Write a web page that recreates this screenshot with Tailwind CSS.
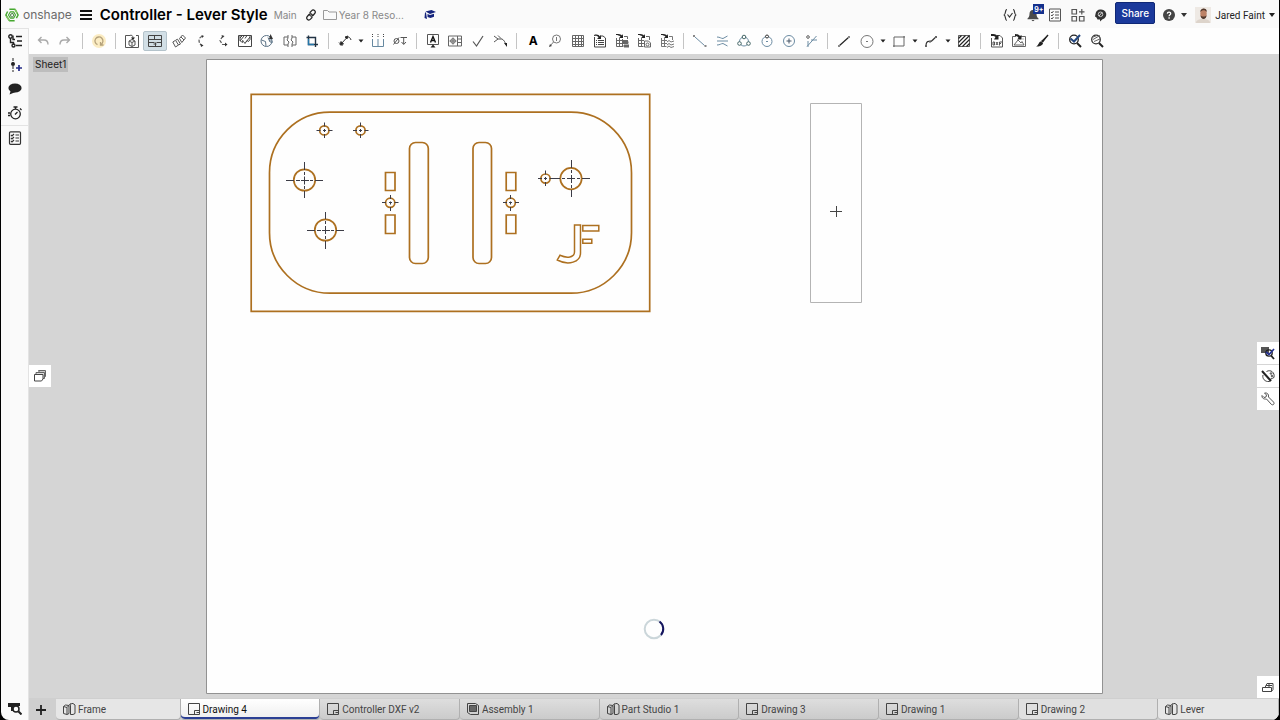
<!DOCTYPE html>
<html lang="en">
<head>
<meta charset="utf-8">
<meta name="viewport" content="width=device-width, initial-scale=1">
<title>Controller - Lever Style</title>
<script src="https://cdn.jsdelivr.net/npm/@tailwindcss/browser@4"></script>
</head>
<body class="h-screen bg-black font-['Inter','Liberation_Sans',sans-serif] text-[#333]">
<div class="flex h-screen flex-col px-px">
<div class="flex min-h-0 flex-1 flex-col overflow-hidden rounded-b-lg bg-[#fafafa]">

  <!-- Document header -->
  <header class="flex h-7 shrink-0 items-center pt-0.5 text-[10px]">
    <a href="#" class="ml-1 flex items-center gap-1 text-xs text-[#6b6b6b]" aria-label="Onshape">
      <svg class="size-3.5" viewBox="0 0 16 16" fill="none" stroke="#45a72f" stroke-width="1.7" stroke-linejoin="round"><path d="M5 1.5h6.500L15 8l-2 3.500M11 14.500H5L1 8l2-4"/><path d="M11.500 1.500 14 6M1.500 9.500 5 14.500" stroke="#85c663"/><path d="M6 4.500h4L12 8l-2 3.500H6L4 8z" stroke-width="1.300"/><path d="M6.500 7 9 6l1 3-2 1.500-1.500-1z" stroke="#286e24" stroke-width="1"/></svg>
      <span>onshape</span>
    </a>
    <button aria-label="Menu" class="ml-2"><svg class="h-3 w-3" viewBox="0 0 12 12" stroke="#111" stroke-width="1.800"><path d="M0 2h12M0 6h12M0 10h12"/></svg></button>
    <h1 class="ml-2 text-[15px] font-semibold whitespace-nowrap text-black">Controller - Lever Style</h1>
    <span class="ml-1.5 text-[#888]">Main</span>
    <button aria-label="Copy link" class="ml-2"><svg class="size-3" viewBox="0 0 12 12" fill="none" stroke="#222" stroke-width="1.200" stroke-linecap="round"><path d="m5 3.500 1.500-1.700c2-2 5 .5 3.200 2.700L8 6.500c-1 1-2.500.8-3.200-.3M7 8.500l-1.500 1.700c-2 2-5-.5-3.200-2.700L4 5.500c1-1 2.500-.8 3.200.3"/></svg></button>
    <a href="#" class="ml-1.5 flex items-center gap-0.5 text-[#888]">
      <svg class="h-3 w-3.5" viewBox="0 0 14 12" fill="none" stroke="#999"><path d="M.5 10.500v-9h4l1.500 1.500h7.500v7.500z"/></svg>Year 8 Reso...</a>
    <button aria-label="Learning center" class="ml-5"><svg class="h-3 w-3" viewBox="0 0 12 12" fill="#15247c"><path d="M1.500 2.500 7.500 1 12 3 6 5zM3.500 5 6 6l4-1.300v3L6.500 9 3.500 8zM1 3.500h1L3 10 .5 9z"/></svg></button>

    <div class="ml-auto flex items-center">
      <button aria-label="Variables"><svg class="h-3.5 w-3.5" viewBox="0 0 14 14" fill="none" stroke="#333" stroke-width="1.200"><path d="M4 1.500C1.500 1.500 3.500 6.500.8 7c2.700.5.700 5.500 3.200 5.500M10 1.500c2.500 0 .500 5 3.200 5.500-2.700.500-.700 5.500-3.200 5.500M4.500 6.500 6.500 9l3-4"/></svg></button>
      <button aria-label="Notifications" class="relative ml-2.5"><svg class="h-3.5 w-3" viewBox="0 0 12 14" fill="#4a4a4a"><path d="M6 2C3.500 2 2.500 4 2.500 6c0 2.500-.8 3.500-2 4.500v.7h11v-.7c-1.200-1-2-2-2-4.500 0-2-1-4-3.500-4zM4.500 12h3c-.5 1.500-2.500 1.500-3 0z"/></svg><span class="absolute -top-1 left-1.5 flex h-2.5 w-[11px] items-center justify-center bg-[#14308c] text-[7px] leading-none font-bold text-white">9+</span></button>
      <button aria-label="Tasks" class="ml-2.5"><svg class="h-3.5 w-3" viewBox="0 0 12 14" fill="none" stroke="#555"><path d="M.5 1h11v12H.5zM6 4h4M6 7h4M6 10h4M2 4l1 1 1.500-2M2 7l1 1 1.500-2M2 10l1 1 1.500-2"/></svg></button>
      <button aria-label="Apps" class="ml-2.5"><svg class="size-3.5" viewBox="0 0 14 14" fill="none" stroke="#555" stroke-width="1.200"><path d="M1 1.500h4.500V6H1zM1 8.500h4.500V13H1zM8.500 8.500H13V13H8.500zM10.800 1v5.500M8 3.800h5.500" /></svg></button>
      <button aria-label="AI advisor" class="ml-2"><svg class="size-3.5" viewBox="0 0 14 14"><path d="M7 1.500a5.300 5 0 0 1 2.500 9.700L7 13.500v-2H4.500l-1-2-1.500-1 .5-2.500C2.800 3 5 1.500 7 1.500z" fill="#333"/><circle cx="7.500" cy="6.300" r="2.300" fill="none" stroke="#fff" stroke-width=".7"/><path d="m6 8 3-3.500" stroke="#fff" stroke-width=".8"/></svg></button>
      <button class="-mt-1 ml-2 h-[22px] w-10 rounded-xs border border-[#0f2775] bg-[#1b399b] font-medium text-white">Share</button>
      <button aria-label="Help" class="ml-2 flex items-center gap-1.5"><svg class="size-3" viewBox="0 0 12 12"><circle cx="6" cy="6" r="6" fill="#444"/><path d="M4.300 4.600C4.500 2.600 7.800 2.700 7.700 4.700 7.600 5.800 6.100 5.900 6.100 7.200M6.100 8.300v1.400" fill="none" stroke="#fff" stroke-width="1.300"/></svg><svg class="h-1 w-1.5" viewBox="0 0 6 4" fill="#333"><path d="M0 0h6L3 4z"/></svg></button>
      <button class="mr-1 ml-2 flex items-center gap-1 font-['Roboto',sans-serif] whitespace-nowrap text-[#222]">
        <svg class="size-4" viewBox="0 0 16 16"><path d="M0 0h16v16H0z" fill="#eee9e4"/><path d="M1 16c0-3 3-4 7-4s7 1 7 4z" fill="#ddd4cb"/><ellipse cx="8.500" cy="6.500" rx="3.200" ry="4.800" fill="#bd8266"/><path d="M5.300 5C5 1 12 0 11.800 5c-2-2.500-4.500-2-6.500 0zM5.500 8c.5 2 5.500 2 6 0 .2 5-5.800 5.500-6 0z" fill="#51382c"/></svg>
        Jared Faint<svg class="h-1 w-1.5" viewBox="0 0 6 4" fill="#222"><path d="M0 0h6L3 4z"/></svg></button>
    </div>
  </header>

  <div class="flex min-h-0 flex-1">
    <!-- Side rail -->
    <nav class="flex w-7 shrink-0 flex-col items-center border-t border-r border-[#e3e3e3] [&_svg]:size-3.5 [&>button]:flex [&>button]:h-6 [&>button]:w-full [&>button]:items-center [&>button]:justify-center" aria-label="Panels">
      <button aria-label="Feature list"><svg viewBox="0 0 14 14" fill="none" stroke="#222" stroke-width="1.400"><circle cx="2.500" cy="2.500" r="1.700"/><path d="M2.500 4v4.500h3v2M5 1.500v4h2M8 2.500h6M9 7h5M8 11.500h6"/><circle cx="5.500" cy="11.500" r="1.500"/></svg></button>
      <button aria-label="Insert version"><svg viewBox="0 0 14 14" fill="none" stroke="#222"><path d="M5 0v14" stroke-dasharray="3 1"/><circle cx="5" cy="6" r="2" fill="#222" stroke="none"/><path d="M8 10h6M11 7v6" stroke="#232a85" stroke-width="1.700"/></svg></button>
      <button aria-label="Comments"><svg viewBox="0 0 14 14" fill="#222"><ellipse cx="7" cy="6" rx="6.600" ry="4.600"/><path d="M3 8 1.500 12.500 7.500 10z"/></svg></button>
      <button aria-label="History"><svg viewBox="0 0 14 14" fill="none" stroke="#222" stroke-width="1.300"><circle cx="7.500" cy="8" r="4.800"/><path d="M5.500 1h4M7.500 1v2M12 2.500l1.500 1.500M7 8.500 9.500 6M0 7h2M0 9.500h2"/></svg></button>
      <button aria-label="Properties" class="border-t border-[#e3e3e3]"><svg viewBox="0 0 14 14" fill="none" stroke="#333" stroke-width="1.200"><rect x="1.500" y=".8" width="11" height="12.500" rx="1"/><path d="M7.500 4H11M7.500 7H11M7.500 10H11M3 4l1 1 2-2M3 7l1 1 2-2M3 10l1 1 2-2"/></svg></button>
      <button class="mt-auto" aria-label="Search tabs"><svg viewBox="0 0 14 14"><path d="M0 2h12v3H6v5H3V6H0z" fill="#222"/><circle cx="8" cy="8" r="3" fill="#fff" stroke="#222" stroke-width="1.500"/><path d="m10.500 10.500 3 3" stroke="#222" stroke-width="2"/></svg></button>
    </nav>

    <div class="flex min-w-0 flex-1 flex-col">
      <!-- Drawing toolbar -->
      <div role="toolbar" aria-label="Drawing tools" class="h-[26px] shrink-0 bg-[#fefefe] pl-[3px]">
        <div class="flex h-full w-[1076px] items-center [&_svg]:size-3.5 [&_svg]:shrink-0 [&>button]:flex [&>button]:h-5 [&>button]:min-w-0 [&>button]:flex-[22_1_0] [&>button]:items-center [&>button]:justify-center [&>button.menu]:flex-[10_1_0] [&>hr]:h-4 [&>hr]:flex-[11_1_0] [&>hr]:border-0 [&>hr]:bg-[linear-gradient(#c4c4c4,#c4c4c4)] [&>hr]:bg-[length:1px_100%] [&>hr]:bg-center [&>hr]:bg-no-repeat">
          <button aria-label="Undo"><svg viewBox="0 0 14 14" fill="none" stroke="#aaa" stroke-width="1.400"><path d="M5.500 3 2.500 6l3 3M3 6h5c3 0 4 1.500 4 4.500"/></svg></button>
          <button aria-label="Redo"><svg viewBox="0 0 14 14" fill="none" stroke="#aaa" stroke-width="1.400"><path d="m8.500 3 3 3-3 3M11 6H6c-3 0-4 1.500-4 4.500"/></svg></button>
          <hr>
          <button aria-label="Update"><svg viewBox="0 0 14 14" fill="none"><circle cx="7" cy="7" r="7" fill="#fbecc3"/><path d="M5.500 10.700a4 4 0 1 1 3.500-.3M8.500 8v3h3" stroke="#b5a27b" stroke-width="1.300"/></svg></button>
          <hr>
          <button aria-label="Insert view"><svg viewBox="0 0 14 14" fill="none" stroke="#555"><path d="M5 1.500H.5v12h13v-12H11M4 7l3-1.500L10 7v4l-3 1.500L4 11zM4 7l3 1.500L10 7M7 8.500v4M4.500 1.500C7 .5 8 2 8 4"/><path d="M6 3.500h4L8 6z" fill="#222" stroke="none"/></svg></button>
          <button aria-label="Projected view" aria-pressed="true" class="rounded-xs border border-[#b4c3cb] bg-[#d2dfe6]"><svg viewBox="0 0 14 14" fill="none" stroke="#444"><path d="M.5 1.500h13v11H.5zM.5 5.500h13M6.500 1.500v4M.5 8.500h6M8.500 8.500h5M7.500 8.500v4M5.500 10h3"/></svg></button>
          <button aria-label="Auxiliary view"><svg viewBox="0 0 14 14" fill="none" stroke="#555"><path d="m.8 8 2.700-1.700L6.500 11l-3 2zM4 6l1.500-.8L8.500 10l-2 1M7.500 4.500 10.500 1 13.500 4 9.800 8.500zM9 3l3 3"/></svg></button>
          <button aria-label="Section view"><svg viewBox="0 0 14 14" fill="none" stroke="#555" stroke-width="1.200"><path d="M8 2.500C4.500 3.500 4 8 7 11" stroke-dasharray="3 1.500"/><path d="m7.500 1 2.500 1-2 2zM6.500 9.500l3 2-2.500 1.500z" fill="#333" stroke="none"/></svg></button>
          <button aria-label="Aligned section"><svg viewBox="0 0 14 14" fill="none" stroke="#555" stroke-width="1.200"><path d="M6.500 2.500 4 6.500 6.500 10.500H10" stroke-dasharray="3 1.500"/><path d="m5.500 1 3 1-2 2zM9 8.500l2.500 2L9 12.500z" fill="#333" stroke="none"/></svg></button>
          <button aria-label="Broken-out section"><svg viewBox="0 0 14 14" fill="none" stroke="#444"><path d="M.5 1.500h13v11H.5zM2 1.500v5l2 2 1.500-1L7 9.500l2-3 1.500 1 1.500-2v-4M2 4l2-2M2 7l4-5M4 8l1-2M8 8l4-5M9 1.500l-2 3"/></svg></button>
          <button aria-label="Detail view"><svg viewBox="0 0 14 14" fill="none" stroke="#5b7286"><circle cx="6.500" cy="7" r="5.500"/><path d="m1.500 6 4 1.500L6 12M8 3.500 10 8h3M9 6h3"/><path d="m9 5 1.500-5L13 5z" fill="#333" stroke="none"/></svg></button>
          <button aria-label="Break view"><svg viewBox="0 0 14 14" fill="none" stroke="#666"><path d="M5 3H1v8h4M9 3h4v8H9M5 1v3l-1 2 2 2-1 2v3M9 1v3L8 6l2 2-1 2v3"/></svg></button>
          <button aria-label="Crop view"><svg viewBox="0 0 14 14" fill="none" stroke="#234" stroke-width="1.400"><path d="M3.500 1.500v9h9.500M1.500 3.500h9V13"/><path d="M3.500 5v5.500H9" stroke="#2477aa"/></svg></button>
          <hr>
          <button aria-label="Dimension"><svg viewBox="0 0 14 14" fill="none" stroke="#333"><path d="m3 10 6-6.500M1 8.500l3.500 3.500M9 3c2.500 0 3.500 1 4 3"/><path d="m2 11 1-3.500L5.500 10zM10 2 9 5 7 3z" fill="#222"/></svg></button><button class="menu" aria-label="Dimension options"><svg viewBox="0 0 14 14"><path d="M4.500 5.500h5L7 8.500z" fill="#222"/></svg></button>
          <button aria-label="Ordinate dimension"><svg viewBox="0 0 14 14" fill="none" stroke="#6688a0"><path d="M1.500 5v7.500h11V5M7 5v7.500"/><path d="M1.500 0v3M7 0v3M12.500 0v3" stroke="#444" stroke-dasharray="1 1"/></svg></button>
          <button aria-label="Hole callout"><svg viewBox="0 0 14 14" fill="none" stroke="#555"><circle cx="3.500" cy="7" r="2.500"/><path d="M.5 10.500 6 3.500M7.500 3.500H14M10.700 3.500V10M8.500 8l2.200 2.500L13 8"/></svg></button>
          <hr>
          <button aria-label="Note"><svg viewBox="0 0 14 14" fill="none" stroke="#555"><path d="M1.500.5h11v10h-11z"/><path d="M4.500 8.500 7 2.500l2.500 6M5.500 6.500h3" stroke="#111" stroke-width="1.400"/><path d="M4.500 13.500 7 10.500l2.500 3z" fill="#222" stroke="none"/></svg></button>
          <button aria-label="Geometric tolerance"><svg viewBox="0 0 14 14" fill="none" stroke="#666"><path d="M.5 2h13v10H.5zM9.500 2v10M10 5h3.500M10 8.500h3.500"/><circle cx="5" cy="7" r="2.300"/><path d="M5 3.500v7M1.500 7h7"/></svg></button>
          <button aria-label="Surface finish"><svg viewBox="0 0 14 14" fill="none" stroke="#555" stroke-width="1.200"><path d="M2 7.500 5.500 12 12 2"/></svg></button>
          <button aria-label="Weld symbol"><svg viewBox="0 0 14 14" fill="none" stroke="#555"><path d="m1 2 4 3-4 3M5 5h4c2 1 3 3 4 6M5 1.500l3 3"/><path d="M11 9h3v4z" fill="#222" stroke="none"/></svg></button>
          <hr>
          <button aria-label="Text" class="text-xs font-bold text-black">A</button>
          <button aria-label="Balloon"><svg viewBox="0 0 14 14" fill="none" stroke="#777"><circle cx="8.500" cy="5" r="4"/><path d="M5.500 8 2 12M8.500 3v4"/><path d="m1 13 1-3 2 2z" fill="#444" stroke="none"/></svg></button>
          <button aria-label="Table"><svg viewBox="0 0 14 14" fill="none" stroke="#666"><path d="M1.500 1.500h11v11h-11zM4.500 1v12M7.500 1v12M10.500 1v12M1 4.500h12M1 7.500h12M1 10.500h12"/></svg></button>
          <button aria-label="Bill of materials"><svg viewBox="0 0 14 14" fill="none" stroke="#444"><path d="M1.500 3v10h11V4L10 2H7M5 6.500h6M5 8.500h6M5 10.500h6M3 6.500h1M3 8.500h1M3 10.500h1"/><path d="M1 1c3-1 5 0 6 1.500L8 1v4H4l1.500-1.500C5 2 3 1.500 1 2z" fill="#222" stroke="none"/></svg></button>
          <button aria-label="Hole table"><svg viewBox="0 0 14 14" fill="none" stroke="#666"><path d="M1.500 4v8.500H8M4.500 4v8.500M7.500 5v7.500M1 6.500h12M1 9.500h6M9 2.500h3.500V5"/><path d="M1 0c3 0 5 0 6 1.500L8 0v4H4l1.500-1.500C4 1.500 3 1 1 1z" fill="#222" stroke="none"/><path d="M8 7.500h5v2H8zM9 11h5v2H9z" fill="#666"/></svg></button>
          <button aria-label="Revision table"><svg viewBox="0 0 14 14" fill="none" stroke="#666"><path d="M1.500 4v8.500h5M4.500 4v8.500M1 6.500h6M1 9.500h6M9 2.500h3.500V6M7.500 7h4l2 2v4h-6z"/><circle cx="10.500" cy="10.500" r="1.500"/><path d="M1 0c3 0 5 0 6 1.500L8 0v4H4l1.500-1.500C4 1.500 3 1 1 1z" fill="#222" stroke="none"/></svg></button>
          <button aria-label="Cut list table"><svg viewBox="0 0 14 14" fill="none" stroke="#777"><path d="M1.500 4v8.500h5M4.500 4v8.500M1 6.500h6M1 9.500h6M9 2.500h3.500V6M7 8l2-1.500 2 1.500 3-1M7 11l2-1.500 2 1.500 3-1M7 13.500l2-1.500 2 1.500 3-1"/><path d="M1 0c3 0 5 0 6 1.500L8 0v4H4l1.500-1.500C4 1.500 3 1 1 1z" fill="#222" stroke="none"/></svg></button>
          <hr>
          <button aria-label="Centerline"><svg viewBox="0 0 14 14" fill="none" stroke="#6c8ca3"><path d="m2 3 9.500 8.500"/><path d="M0 1h2v2H0zM11.500 11h2v2h-2z" fill="#888" stroke="none"/></svg></button>
          <button aria-label="Line centerline"><svg viewBox="0 0 14 14" fill="none" stroke="#6c8ca3"><path d="M2 7h11M2 3c3 0 4 1.500 6 1.500L12.500 2M2 11c3 0 4-1.500 6-1.500l4.500 2.500"/></svg></button>
          <button aria-label="Three point circle"><svg viewBox="0 0 14 14" fill="none" stroke="#6c8ca3"><circle cx="7" cy="7.500" r="4.500"/><g fill="#fff" stroke="#466"><circle cx="7" cy="3" r="1.800"/><circle cx="2.500" cy="9.500" r="1.800"/><circle cx="11.500" cy="9.500" r="1.800"/></g></svg></button>
          <button aria-label="Two point circle"><svg viewBox="0 0 14 14" fill="none" stroke="#6c8ca3"><circle cx="7" cy="7.500" r="5"/><path d="M6 7.500h2"/><circle cx="7" cy="2.500" r="1.500" fill="#fff" stroke="#333"/></svg></button>
          <button aria-label="Centermark"><svg viewBox="0 0 14 14" fill="none" stroke="#6c8ca3"><circle cx="7" cy="7" r="5.500"/><path d="M4.500 7h5M7 4.500v5" stroke="#456"/></svg></button>
          <button aria-label="Virtual sharp"><svg viewBox="0 0 14 14" fill="none" stroke="#6c8ca3"><path d="M3 12.500 12.500 2M7 6H13M4 7v6"/><path d="M2 3h4M4 1v4" stroke="#333" stroke-dasharray="1.500 1"/></svg></button>
          <hr>
          <button aria-label="Line"><svg viewBox="0 0 14 14" stroke="#222" stroke-width="1.200"><path d="m2 12 10-9"/><path d="M1 11h2v2H1zM11 2h2v2h-2z" fill="#888" stroke="none"/></svg></button>
          <button aria-label="Circle"><svg viewBox="0 0 14 14" fill="none" stroke="#777"><circle cx="7" cy="7.500" r="6"/><path d="M6 7.500h2"/></svg></button><button class="menu" aria-label="Circle options"><svg viewBox="0 0 14 14"><path d="M4.500 5.500h5L7 8.500z" fill="#222"/></svg></button>
          <button aria-label="Rectangle"><svg viewBox="0 0 14 14" fill="none" stroke="#666"><path d="M2 3h10v9H2z"/><path d="M1 11h2v2H1zM11 2h2v2h-2z" fill="#888" stroke="none"/></svg></button><button class="menu" aria-label="Rectangle options"><svg viewBox="0 0 14 14"><path d="M4.500 5.500h5L7 8.500z" fill="#222"/></svg></button>
          <button aria-label="Spline"><svg viewBox="0 0 14 14" fill="none" stroke="#333" stroke-width="1.200"><path d="M2 12c0-3 1-5 3.500-4.500S9 5 12 3"/><path d="M1 11h2v2H1zM5 6.500h2v2H5zM11 2h2v2h-2z" fill="#666" stroke="none"/></svg></button><button class="menu" aria-label="Spline options"><svg viewBox="0 0 14 14"><path d="M4.500 5.500h5L7 8.500z" fill="#222"/></svg></button>
          <button aria-label="Hatch"><svg viewBox="0 0 14 14" stroke="#222" stroke-width="1.200"><path d="M1.500 4.500l3-3M1.500 8.500l7-7M1.500 12.500l11-11M5.500 12.500l7-7M9.500 12.500l3-3" /><path d="M1.500 1.500h11v11h-11z" fill="none" stroke-width=".7"/></svg></button>
          <hr>
          <button aria-label="Insert DXF"><svg viewBox="0 0 14 14" fill="none" stroke="#555"><path d="M1.500 4v9h11V4L10 1.500H7M3 8v3h1.500V8zM6 8l2 3M8 8l-2 3M9.500 11.500V8H12M9.500 9.500H11"/><path d="M1 0c3 0 5 0 6 1.500L8.500 1v4.500H4L5.500 3C4 1.500 3 2 1 2z" fill="#222" stroke="none"/></svg></button>
          <button aria-label="Insert image"><svg viewBox="0 0 14 14" fill="none" stroke="#666"><path d="M4 2.500H.5v10h13v-10H9M2 11l4-5 3 3 1-1.500 2 3.500zM11 4.500v1"/><path d="M3 0c3 0 4 1 5 2l1.500-1v4.500H5L6.500 4C5.500 2 4.500 2 3 2z" fill="#222" stroke="none"/></svg></button>
          <button aria-label="Line style"><svg viewBox="0 0 14 14"><path d="M13 1 6 7 8 8.500z" fill="#222"/><path d="M6 7.500C4 7 4 11 1 12.500c3 .5 7-1 7-3.500z" fill="#222"/><path d="m7 8 6-7" stroke="#222" stroke-width="1.400"/></svg></button>
          <hr>
          <button aria-label="Check"><svg viewBox="0 0 14 14" fill="none"><circle cx="6" cy="5.500" r="4.300" stroke="#222" stroke-width="1.300"/><path d="m9 9 4 4" stroke="#222" stroke-width="2"/><path d="M2.500 4.500 6 7.500 12 1" stroke="#24477f" stroke-width="2"/></svg></button>
          <button aria-label="Compare"><svg viewBox="0 0 14 14" fill="none"><circle cx="6" cy="5.500" r="4.300" stroke="#333" stroke-width="1.300"/><path d="m9 9 4 4" stroke="#222" stroke-width="2"/><path d="M3 5.500 10 1.500M4 7.500l7-3M2 3.500l5-2" stroke="#666"/></svg></button>
        </div>
      </div>

      <!-- Drawing canvas -->
      <main class="relative flex min-h-0 flex-1 justify-center bg-[#d5d5d5] pt-[5px] pb-1">
        <svg class="h-full" viewBox="206 59 897 635" fill="none" role="img" aria-label="Drawing sheet with controller faceplate and lever">
          <path d="M206.500 59.500h896v634h-896z" fill="#fefefe" stroke="#929292"/>
          <g stroke="#ad7020" stroke-width="1.700">
            <path d="M251.200 94.300h398.500v217H251.200z"/>
            <rect x="269.500" y="112.200" width="362" height="181" rx="60.500"/>
            <rect x="409.500" y="142.500" width="18.800" height="121" rx="6"/>
            <rect x="473" y="142.500" width="18.500" height="121" rx="6"/>
            <path d="M385.500 172.500h9.500v18h-9.500zM385.500 215h9.500v18.500h-9.500zM506.200 172.500h9.600v18h-9.600zM506.200 215h9.600v18.500h-9.600z"/>
            <circle cx="304.500" cy="180" r="10.700"/><circle cx="325.500" cy="230" r="10.700"/><circle cx="571" cy="178.600" r="10.700"/>
            <circle cx="324.300" cy="130.400" r="4.600"/><circle cx="360.500" cy="130.400" r="4.600"/><circle cx="390.200" cy="202.800" r="4.600"/><circle cx="510.700" cy="202.800" r="4.600"/><circle cx="545.500" cy="178.600" r="4.600"/>
            <path d="M574.500 225h6v28c0 9-12 13-23.200 7l2.700-4.700c7 3.200 14.500 2.200 14.500-3.300zM582.800 225.500h16v5.500h-16zM582.800 239.300h9v3.900h-9z" stroke-width="1.500"/>
          </g>
          <g stroke="#3c3c46" stroke-width="1">
            <path d="M286 180.500h8M296 180.500h4M301 180.500h8M310 180.500h3M315 180.500h8M304.500 162v8M304.500 172v3M304.500 176.500v8M304.500 186v3M304.500 191v7"/>
            <path d="M307 230.500h8M317 230.500h4M322 230.500h8M331 230.500h3M336 230.500h8M325.500 212v7M325.500 221v3M325.500 226v8M325.500 236v3M325.500 241v8"/>
            <path d="M551 178.500h9M562 178.500h3M567 178.500h8M577 178.500h3M582 178.500h8M571.500 160v8M571.500 170v3M571.500 175v8M571.500 185v3M571.500 190v7"/>
            <path d="M316.500 130.500h4M323 130.500h3M328.500 130.500h4M324.500 122.500v4M324.500 129v3M324.500 134v4"/>
            <path d="M353 130.500h4M359 130.500h3M364.500 130.500h4M360.500 122.500v4M360.500 129v3M360.500 134v4"/>
            <path d="M382 202.500h4M389 202.500h3M394.500 202.500h4M390.500 195v4M390.500 201.500v3M390.500 207v4"/>
            <path d="M503 202.500h4M509 202.500h3M515 202.500h4M510.500 195v4M510.500 201.500v3M510.500 207v4"/>
            <path d="M538 178.500h4M544 178.500h3M545.500 170.500v4M545.500 177v3M545.500 182v4M549.500 178.500h3"/>
            <path d="M830 211.500h12M836.500 206v11" stroke="#444"/>
          </g>
          <path d="M810.500 103.500h51v199h-51z" stroke="#b4b4b4"/>
        </svg>

        <span class="absolute top-[3px] left-1 bg-[#bdbdbd] px-0.5 text-[10px] leading-[15px] text-[#222]">Sheet1</span>
        <button aria-label="Sheets panel" class="absolute top-[311px] left-0 flex h-[22px] w-[22px] items-center justify-center bg-white"><svg class="size-3.5" viewBox="0 0 14 14" fill="#fff" stroke="#666"><path d="M5.500 1.500h7v6l-3 3z" fill="#ccc"/><path d="M3 3.500h8.500v6H3z" fill="#ddd"/><path d="M1.500 5.500H10v4.500L8.500 12h-7z" stroke="#444"/></svg></button>
        <div class="absolute top-[288px] right-0 flex w-[22px] flex-col gap-px [&>button]:flex [&>button]:h-[22px] [&>button]:items-center [&>button]:justify-center [&>button]:bg-white [&_svg]:size-3.5">
          <button aria-label="Find in drawing"><svg viewBox="0 0 14 14" fill="none"><path d="M0 1h8v6H0z" fill="#555"/><circle cx="8" cy="7" r="3.200" stroke="#222" stroke-width="1.300"/><path d="m10 9.500 3 3.500" stroke="#222" stroke-width="1.800"/><path d="m5 6 3 2.500L13 3" stroke="#24308f" stroke-width="1.700"/></svg></button>
          <button aria-label="Styles"><svg viewBox="0 0 14 14" fill="none" stroke="#444"><path d="M5.500 2.500C10 0 14 4 13 8c-.5 2-2 1-3 1.500S11 12 8 12.500c-4 .5-7-3-6-6.500"/><circle cx="10" cy="4.500" r=".8"/><circle cx="11" cy="7" r=".8"/><path d="m1 2 9 10" stroke="#222" stroke-width="2"/></svg></button>
          <button aria-label="Settings"><svg viewBox="0 0 14 14" fill="none" stroke="#555"><path d="M1 3.500 3 5.500l2-.5.500-2-2-2C6 .5 8 2 7.500 5l5 5c1.500 2-.5 3.500-2 2.500L5.500 7C3 7.500.5 6 1 3.500z"/></svg></button>
        </div>
        <button aria-label="Show scale" class="absolute right-0 bottom-0 flex h-[22px] w-[22px] items-center justify-center bg-white"><svg class="size-3.5" viewBox="0 0 14 14" fill="none" stroke="#444"><path d="M1.500 7.500h9v4h-9zM4 7.500l2-4h6v6l-1.500 2M5 5.500h6M8 3.500v4"/></svg></button>
        <svg class="absolute top-[564px] left-1/2 size-[22px] -translate-x-1/2" viewBox="0 0 22 22" fill="none" stroke-width="2" role="status" aria-label="Loading"><circle cx="11" cy="11" r="9.300" stroke="#cbd6da"/><path d="M16.500 3.500a9.300 9.300 0 0 1 1.500 13.500" stroke="#15155f"/></svg>
      </main>

      <!-- Document tabs -->
      <div class="flex h-[22px] shrink-0 bg-[#cfcfcf] pt-px font-['Roboto',sans-serif] text-[10px] text-[#444] [&_svg]:size-3.5 [&_svg]:shrink-0">
        <button aria-label="Add tab" class="flex w-[27px] shrink-0 items-center justify-center pr-1"><svg viewBox="0 0 14 14" stroke="#222" stroke-width="1.800"><path d="M2 7h10M7 2v10"/></svg></button>
        <div role="tablist" class="flex min-w-0 flex-1 [&>button]:flex [&>button]:min-w-0 [&>button]:flex-[140_1_0] [&>button]:items-center [&>button]:gap-0.5 [&>button]:rounded-b-sm [&>button]:border-r [&>button]:border-b [&>button]:border-[#b0b0b0] [&>button]:pl-1.5 [&>button]:whitespace-nowrap [&>button:first-child]:flex-[124_1_0] [&>button:last-child]:flex-[120_1_0]">
          <button role="tab" class="bg-[#e6e6e6]"><svg viewBox="0 0 14 14" fill="none" stroke="#444"><path d="M1.500 4.500v7l3.500 1v-7zM1.500 4.500 3.500 3l3.500.500L5 5.500M5 12.500l2-1v-8M8.500 12.500v-9c0-1 .5-2 1.500-2h1l2 1.500v8.500l-2 1zM8.500 3.500l-1-1 1.500-1"/></svg>Frame</button>
          <button role="tab" aria-selected="true" class="bg-linear-to-b from-white to-[#eee] text-[#111] shadow-[inset_0_-2px_0_#2b3f94]"><svg viewBox="0 0 14 14" fill="none" stroke="#444"><path d="M1.500 1.500h11v11h-11zM7.500 12.500v-4h5M9.500 10.500h3"/></svg>Drawing 4</button>
          <button role="tab" class="bg-linear-to-b from-[#dedede] to-[#cbcbcb]"><svg viewBox="0 0 14 14" fill="none" stroke="#444"><path d="M1.500 1.500h11v11h-11zM7.500 12.500v-4h5M9.500 10.500h3"/></svg>Controller DXF v2</button>
          <button role="tab" class="bg-linear-to-b from-[#dedede] to-[#cbcbcb]"><svg viewBox="0 0 14 14" fill="none" stroke="#444"><path d="M1.500 1.500h8l3 2v9h-8l-3-2z"/><path d="M3.500 3.500h7v6h-7z" fill="#666"/></svg>Assembly 1</button>
          <button role="tab" class="bg-linear-to-b from-[#dedede] to-[#cbcbcb]"><svg viewBox="0 0 14 14" fill="none" stroke="#444"><path d="M1.500 4.500v7l3.500 1v-7zM1.500 4.500 3.500 3l3.500.500L5 5.500M5 12.500l2-1v-8M8.500 12.500v-9c0-1 .5-2 1.500-2h1l2 1.500v8.500l-2 1zM8.500 3.500l-1-1 1.500-1"/></svg>Part Studio 1</button>
          <button role="tab" class="bg-linear-to-b from-[#dedede] to-[#cbcbcb]"><svg viewBox="0 0 14 14" fill="none" stroke="#444"><path d="M1.500 1.500h11v11h-11zM7.500 12.500v-4h5M9.500 10.500h3"/></svg>Drawing 3</button>
          <button role="tab" class="bg-linear-to-b from-[#dedede] to-[#cbcbcb]"><svg viewBox="0 0 14 14" fill="none" stroke="#444"><path d="M1.500 1.500h11v11h-11zM7.500 12.500v-4h5M9.500 10.500h3"/></svg>Drawing 1</button>
          <button role="tab" class="bg-[#e0e0e0]"><svg viewBox="0 0 14 14" fill="none" stroke="#444"><path d="M1.500 1.500h11v11h-11zM7.500 12.500v-4h5M9.500 10.500h3"/></svg>Drawing 2</button>
          <button role="tab" class="bg-[#e6e6e6]"><svg viewBox="0 0 14 14" fill="none" stroke="#444"><path d="M1.500 4.500v7l3.500 1v-7zM1.500 4.500 3.500 3l3.500.500L5 5.500M5 12.500l2-1v-8M8.500 12.500v-9c0-1 .5-2 1.500-2h1l2 1.500v8.500l-2 1zM8.500 3.500l-1-1 1.500-1"/></svg>Lever</button>
        </div>
      </div>
    </div>
  </div>
</div>
</div>
</body>
</html>
